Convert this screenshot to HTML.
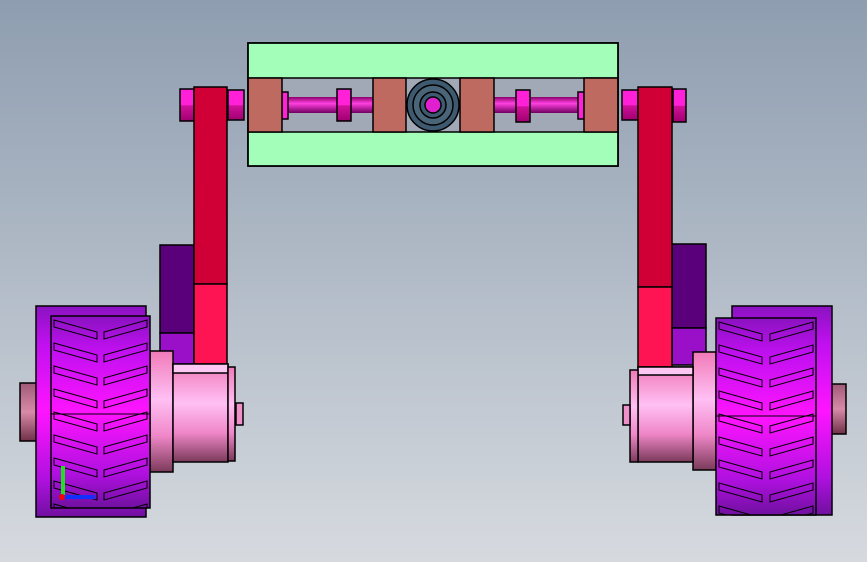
<!DOCTYPE html>
<html><head><style>
html,body{margin:0;padding:0;width:867px;height:562px;overflow:hidden}
body{background:linear-gradient(#8e9db0,#d6dadf)}
</style></head><body>
<svg width="867" height="562" viewBox="0 0 867 562" xmlns="http://www.w3.org/2000/svg" stroke="#000" stroke-width="1.5">
<defs>
<linearGradient id="tire" x1="0" y1="0" x2="0" y2="1">
<stop offset="0" stop-color="#8a12c0"/><stop offset="0.18" stop-color="#c010f0"/><stop offset="0.5" stop-color="#ff14ff"/><stop offset="0.82" stop-color="#b010e0"/><stop offset="1" stop-color="#7010a0"/>
</linearGradient>
<linearGradient id="motor" x1="0" y1="0" x2="0" y2="1">
<stop offset="0" stop-color="#f07ab8"/><stop offset="0.4" stop-color="#ffc0f4"/><stop offset="0.7" stop-color="#f087c8"/><stop offset="1" stop-color="#7a3a5a"/>
</linearGradient>
<linearGradient id="hub" x1="0" y1="0" x2="0" y2="1">
<stop offset="0" stop-color="#a05a78"/><stop offset="0.5" stop-color="#d88aa8"/><stop offset="1" stop-color="#703048"/>
</linearGradient>
<linearGradient id="rod" x1="0" y1="0" x2="0" y2="1">
<stop offset="0" stop-color="#8a006a"/><stop offset="0.4" stop-color="#ff40e0"/><stop offset="1" stop-color="#700060"/>
</linearGradient>
<linearGradient id="nut" x1="0" y1="0" x2="0" y2="1">
<stop offset="0" stop-color="#ff20d8"/><stop offset="0.5" stop-color="#ff20d8"/><stop offset="0.52" stop-color="#d0109a"/><stop offset="1" stop-color="#a00070"/>
</linearGradient>
<pattern id="chevL" x="51" y="318" width="99" height="23" patternUnits="userSpaceOnUse">
<path d="M3 2 L46 14 L46 21 L3 9 Z M53 14 L96 2 L96 9 L53 21 Z" fill="none" stroke="#000" stroke-width="1"/>
</pattern>
<pattern id="chevR" x="716" y="320" width="100" height="23" patternUnits="userSpaceOnUse">
<path d="M3 2 L46 14 L46 21 L3 9 Z M54 14 L97 2 L97 9 L54 21 Z" fill="none" stroke="#000" stroke-width="1"/>
</pattern>
</defs>

<!-- frame -->
<rect x="248" y="43" width="370" height="123" fill="#a0a9b5"/>
<rect x="248" y="43" width="370" height="35" fill="#a2feb8"/>
<rect x="248" y="132" width="370" height="34" fill="#a2feb8"/>
<rect x="282" y="97" width="91" height="16" fill="url(#rod)" stroke="none"/>
<rect x="494" y="97" width="90" height="16" fill="url(#rod)" stroke="none"/>
<rect x="337" y="89" width="14" height="32" fill="url(#nut)"/>
<rect x="516" y="90" width="14" height="32" fill="url(#nut)"/>
<rect x="282" y="92" width="6" height="27" fill="#ff20d8"/>
<rect x="578" y="92" width="6" height="27" fill="#ff20d8"/>
<rect x="248" y="78" width="34" height="54" fill="#bf6a60"/>
<rect x="373" y="78" width="33" height="54" fill="#bf6a60"/>
<rect x="460" y="78" width="34" height="54" fill="#bf6a60"/>
<rect x="584" y="78" width="34" height="54" fill="#bf6a60"/>
<circle cx="433" cy="105" r="26" fill="#3e5a70"/>
<circle cx="433" cy="105" r="20" fill="#4a6478"/>
<circle cx="433" cy="105" r="13" fill="#3e5a70"/>
<circle cx="433" cy="105" r="8" fill="#e020d0"/>
<rect x="248" y="43" width="370" height="123" fill="none"/>

<!-- nuts -->
<rect x="180" y="89" width="14" height="32" fill="url(#nut)"/>
<rect x="228" y="90" width="16" height="30" fill="url(#nut)"/>
<rect x="622" y="90" width="16" height="30" fill="url(#nut)"/>
<rect x="673" y="89" width="13" height="33" fill="url(#nut)"/>

<!-- arms -->
<rect x="160" y="245" width="34" height="88" fill="#5a007a"/>
<rect x="160" y="333" width="34" height="32" fill="#9a10c8"/>
<rect x="194" y="87" width="33" height="197" fill="#d00036"/>
<rect x="194" y="284" width="33" height="81" fill="#ff1453"/>
<rect x="672" y="244" width="34" height="84" fill="#5a007a"/>
<rect x="672" y="328" width="34" height="37" fill="#9a10c8"/>
<rect x="638" y="87" width="34" height="200" fill="#d00036"/>
<rect x="638" y="287" width="34" height="80" fill="#ff1453"/>

<!-- left motor -->
<rect x="150" y="351" width="23" height="121" fill="url(#motor)"/>
<rect x="173" y="364" width="55" height="98" fill="url(#motor)"/>
<rect x="173" y="364" width="55" height="9" fill="#ffc8f4"/>
<rect x="228" y="367" width="7" height="94" fill="url(#motor)"/>
<rect x="236" y="403" width="7" height="22" fill="#f090c8"/>
<!-- left wheel -->
<rect x="20" y="383" width="30" height="58" fill="url(#hub)"/>
<rect x="36" y="306" width="110" height="211" fill="url(#tire)"/>
<rect x="51" y="316" width="99" height="192" fill="url(#tire)"/>
<rect x="51" y="316" width="99" height="192" fill="url(#chevL)" stroke="none"/>
<line x1="51" y1="414" x2="150" y2="414" stroke-width="1"/>
<!-- axes -->
<line x1="63" y1="498" x2="63" y2="466" stroke="#20e020" stroke-width="4"/>
<line x1="63" y1="497" x2="95" y2="497" stroke="#1030ff" stroke-width="4"/>
<circle cx="62" cy="497" r="3" fill="#f00" stroke="none"/>

<!-- right motor -->
<rect x="693" y="352" width="23" height="118" fill="url(#motor)"/>
<rect x="638" y="367" width="55" height="95" fill="url(#motor)"/>
<rect x="638" y="367" width="55" height="8" fill="#ffc8f4"/>
<rect x="630" y="370" width="8" height="92" fill="url(#motor)"/>
<rect x="623" y="405" width="7" height="20" fill="#f090c8"/>
<!-- right wheel -->
<rect x="817" y="384" width="29" height="50" fill="url(#hub)"/>
<rect x="732" y="306" width="100" height="209" fill="url(#tire)"/>
<rect x="716" y="318" width="100" height="197" fill="url(#tire)"/>
<rect x="716" y="318" width="100" height="197" fill="url(#chevR)" stroke="none"/>
<line x1="716" y1="416" x2="816" y2="416" stroke-width="1"/>
</svg>
</body></html>
